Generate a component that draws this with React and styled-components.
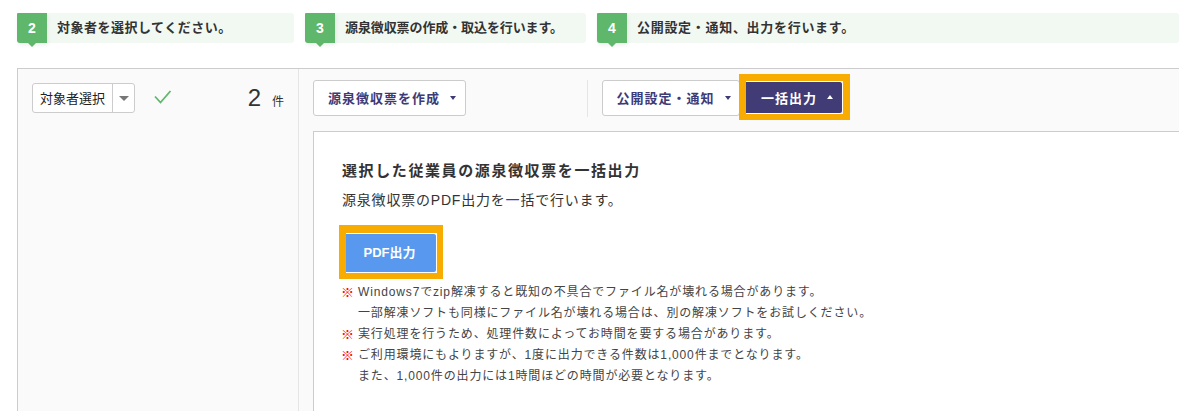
import React from 'react';
import styled, { createGlobalStyle } from 'styled-components';

const Global = createGlobalStyle`
  html, body { margin: 0; padding: 0; background: #fff; overflow: hidden; }
  body { font-family: "Liberation Sans", "Noto Sans CJK JP", sans-serif; color: #333; }
  * { box-sizing: border-box; }
`;
const Page = styled.div`
  width: 1179px; height: 411px; overflow: hidden;
  padding: 13px 0 0 17px;
  display: flex; flex-direction: column;
`;
const Steps = styled.div`display: flex; gap: 11px; height: 30px; margin-bottom: 25px;`;
const Step = styled.div`
  display: flex; align-items: center; background: #f2f9f3; border-radius: 3px;
  width: ${p => p.$w}px; height: 30px; flex: ${p => p.$grow ? '1' : 'none'};
  font-size: 13px; font-weight: 700; color: #333; letter-spacing: ${p => p.$ls}px;
`;
const StepText = styled.span`margin-bottom: 3px;`;
const Badge = styled.div`
  position: relative; width: 30px; height: 30px; margin-right: 10px; flex: none;
  background: #5fb76c; color: #fff; font-size: 14px; font-weight: 700; letter-spacing: 0;
  display: flex; align-items: center; justify-content: center;
  border-radius: 1px 0 0 3px; box-shadow: 1px 2px 4px rgba(0,0,0,.07);
  &::after {
    content: ""; position: absolute; left: 11px; top: 30px;
    border: 4px solid transparent; border-top-color: #5fb76c; border-bottom: 0;
  }
`;
const Panel = styled.div`
  display: flex; flex: 1; background: #fafafa;
  border: 1px solid #ccc; border-right: 0; border-bottom: 0;
`;
const Side = styled.div`
  width: 281px; flex: none; border-right: 1px solid #e5e5e5;
  padding: 14px 14px 0 14px; display: flex; align-items: flex-start;
`;
const SelectBox = styled.div`
  display: flex; width: 103px; height: 30px; background: #fff;
  border: 1px solid #ccc; border-radius: 3px; font-size: 13px; color: #222;
`;
const SelectLabel = styled.div`
  width: 80px; flex: none; display: flex; align-items: center; justify-content: center;
  border-right: 1px solid #ccc; padding-bottom: 1px;
`;
const SelectCaret = styled.div`flex: 1; display: flex; align-items: center; justify-content: center;`;
const Caret = styled.span`
  width: 0; height: 0; border-left: ${p => p.$s}px solid transparent; border-right: ${p => p.$s}px solid transparent;
  ${p => p.$up ? `border-bottom: ${p.$h}px solid ${p.$c};` : `border-top: ${p.$h}px solid ${p.$c};`}
`;
const Check = styled.svg`width: 18px; height: 14px; margin: 7px 0 0 19px; flex: none;`;
const Count = styled.div`
  margin-left: auto; display: flex; align-items: baseline; gap: 11px;
  font-size: 12px; color: #333; line-height: 30px;
`;
const CountNum = styled.span`font-size: 24px;`;
const Main = styled.div`flex: 1; padding: 11px 0 0 14px; display: flex; flex-direction: column; min-width: 0;`;
const Toolbar = styled.div`display: flex; align-items: flex-start; height: 36px; margin-bottom: 15px;`;
const OutlineButton = styled.button`
  height: 36px; width: ${p => p.$w}px; padding: 0 0 1px 5px; background: #fff;
  border: 1px solid #ccc; border-radius: 3px; color: #3e3a75;
  font: 700 13px "Liberation Sans", "Noto Sans CJK JP", sans-serif; letter-spacing: 1px;
  display: flex; align-items: center; justify-content: center; gap: 10px; flex: none;
`;
const Divider = styled.div`width: 1px; height: 37px; background: #e5e5e5; margin: 0 14px 0 121px;`;
const ToolHighlight = styled.div`
  flex: none; display: flex; margin: -6px 0 0 -1px; position: relative;
  width: 111px; height: 46px; border: solid #f8ab00; border-width: 7px 7px 6px 7px;
`;
const DarkButton = styled.button`
  width: 97px; height: 33px; padding: 0 0 1px 6px; background: #413c75; color: #fff;
  border: 1px solid #fff; border-left: 0; border-radius: 0 3px 3px 0;
  font: 700 13px "Liberation Sans", "Noto Sans CJK JP", sans-serif; letter-spacing: 1px;
  display: flex; align-items: center; justify-content: center; gap: 10px;
`;
const Content = styled.div`
  flex: 1; background: #fff; border: 1px solid #ccc; border-right: 0; border-bottom: 0;
  padding: 28px 0 0 28px;
`;
const Title = styled.h2`margin: 0 0 7px; font-size: 15px; line-height: 22px; font-weight: 700; color: #333; letter-spacing: 1.6px;`;
const Desc = styled.p`margin: 0 0 14px; font-size: 14px; line-height: 22px; color: #333; letter-spacing: .8px;`;
const Tick = styled.span`color: #3a3ab8;`;
const PdfHighlight = styled.div`
  width: 104px; height: 54px; margin: 0 0 0 -3px; border: solid #f8ab00; border-width: 8px 6px 6px 7px;
`;
const PdfButton = styled.button`
  width: 100%; height: 100%; padding: 0 3px 3px 0; background: #5898ee; color: #fff;
  border: 1px solid #fff; border-left: 0; border-radius: 0 3px 3px 0;
  font: 700 13px "Liberation Sans", "Noto Sans CJK JP", sans-serif;
`;
const Notes = styled.div`margin: 3px 0 0 0; font-size: 12px; line-height: 21px; color: #444;`;
const Note = styled.div`display: flex; letter-spacing: .85px;`;
const Mark = styled.span`width: 16px; flex: none; color: #f00; font-weight: 700; font-size: 13px; letter-spacing: 0; margin-left: -1px; margin-right: 1px;`;
const Spacer = styled.span`width: 16px; flex: none;`;

export default function App() {
  return (
    <Page>
      <Global />
      <Steps>
        <Step $w={277} $ls={0.5}><Badge>2</Badge><StepText>対象者を選択してください。</StepText></Step>
        <Step $w={281} $ls={-0.1}><Badge>3</Badge><StepText>源泉徴収票の作成・取込を行います。</StepText></Step>
        <Step $grow $ls={0.7}><Badge>4</Badge><StepText>公開設定・通知、出力を行います。</StepText></Step>
      </Steps>
      <Panel>
        <Side>
          <SelectBox>
            <SelectLabel>対象者選択</SelectLabel>
            <SelectCaret><Caret $s={5} $h={5} $c="#777" /></SelectCaret>
          </SelectBox>
          <Check viewBox="0 0 18 14"><path d="M1 6.5 L6.5 12.5 L16.5 1" fill="none" stroke="#5fb76c" strokeWidth="1.8" /></Check>
          <Count><CountNum>2</CountNum>件</Count>
        </Side>
        <Main>
          <Toolbar>
            <OutlineButton $w={153}>源泉徴収票を作成<Caret $s={3.5} $h={4} $c="#3e3a75" /></OutlineButton>
            <Divider />
            <OutlineButton $w={138}>公開設定・通知<Caret $s={3.5} $h={4} $c="#3e3a75" /></OutlineButton>
            <ToolHighlight><DarkButton>一括出力<Caret $up $s={3.5} $h={4} $c="#fff" /></DarkButton></ToolHighlight>
          </Toolbar>
          <Content>
            <Title>選択した従業員の源泉徴収票を一括出力</Title>
            <Desc>源泉徴収票のPDF出力を<Tick>一</Tick>括で行います。</Desc>
            <PdfHighlight><PdfButton>PDF出力</PdfButton></PdfHighlight>
            <Notes>
              <Note><Mark>※</Mark>Windows7でzip解凍すると既知の不具合でファイル名が壊れる場合があります。</Note>
              <Note><Spacer />一部解凍ソフトも同様にファイル名が壊れる場合は、別の解凍ソフトをお試しください。</Note>
              <Note><Mark>※</Mark>実行処理を行うため、処理件数によってお時間を要する場合があります。</Note>
              <Note><Mark>※</Mark>ご利用環境にもよりますが、1度に出力できる件数は1,000件までとなります。</Note>
              <Note><Spacer />また、1,000件の出力には1時間ほどの時間が必要となります。</Note>
            </Notes>
          </Content>
        </Main>
      </Panel>
    </Page>
  );
}
